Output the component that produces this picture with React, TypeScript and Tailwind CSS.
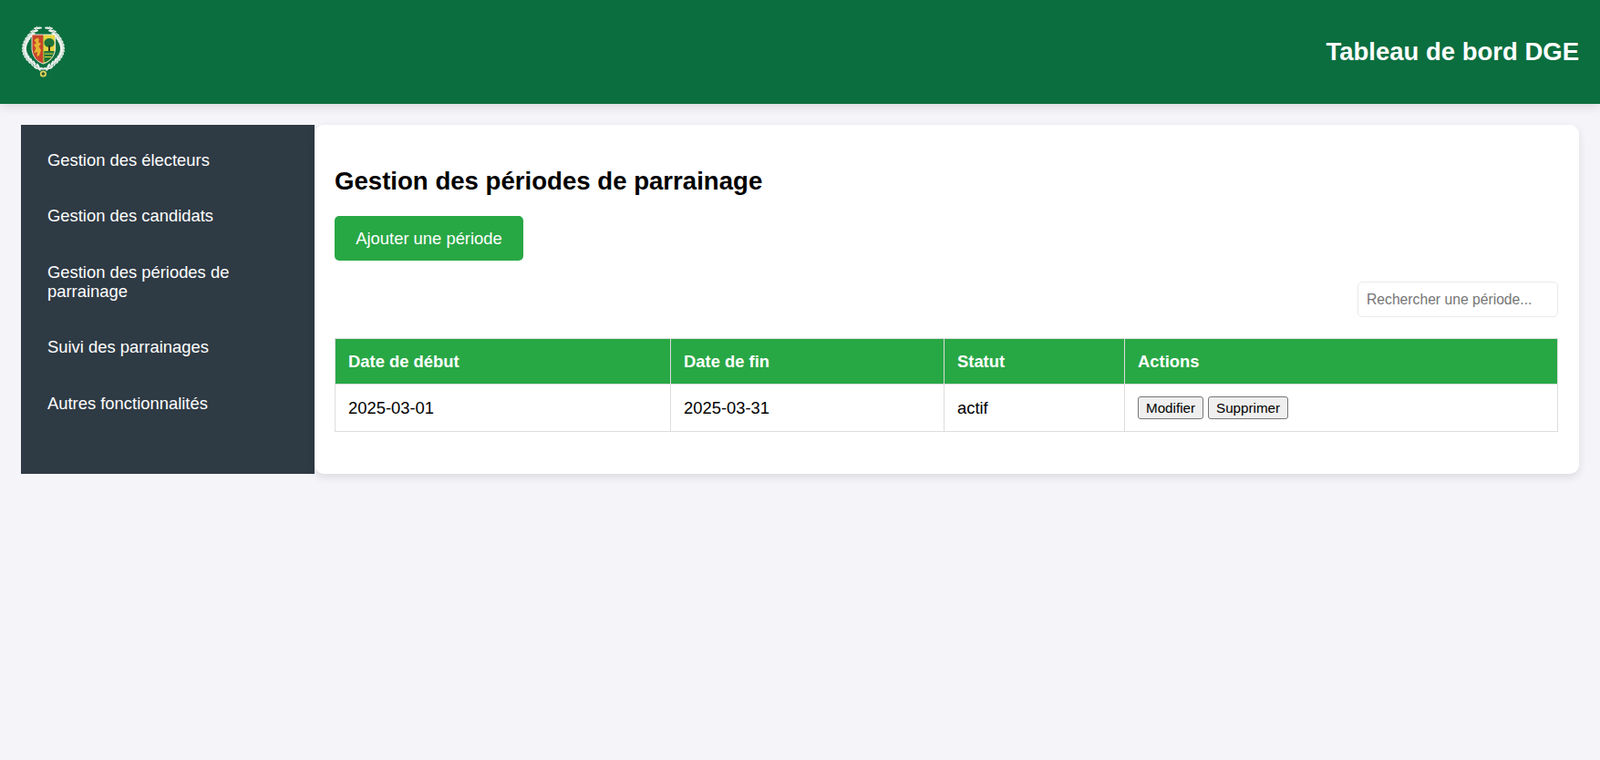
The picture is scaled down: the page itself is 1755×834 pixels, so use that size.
import type { ReactNode } from 'react'

const navItems = [
  'Gestion des électeurs',
  'Gestion des candidats',
  'Gestion des périodes de parrainage',
  'Suivi des parrainages',
  'Autres fonctionnalités',
]

// points along one branch of the wreath, left side
const wreath = Array.from({ length: 15 }, (_, i) => {
  const t = i / 14
  const x = (1 - t) * (1 - t) * 18 + 2 * t * (1 - t) * -11.5 + t * t * 21
  const y = (1 - t) * (1 - t) * 3 + 2 * t * (1 - t) * 28 + t * t * 47
  const tx = 2 * (1 - t) * (-11.5 - 18) + 2 * t * (21 - -11.5)
  const ty = 2 * (1 - t) * (28 - 3) + 2 * t * (47 - 28)
  return { x, y, angle: (Math.atan2(ty, tx) * 180) / Math.PI }
})

function Branch() {
  return (
    <g>
      {wreath.map((p, i) => (
        <g key={i}>
          <ellipse cx={p.x - 1.5} cy={p.y} rx="4.6" ry="1.2" fill="#eef3ef" transform={`rotate(${p.angle + 35} ${p.x} ${p.y})`} />
          <ellipse cx={p.x + 1} cy={p.y} rx="3.4" ry="1" fill="#c9d8ce" transform={`rotate(${p.angle - 35} ${p.x} ${p.y})`} />
        </g>
      ))}
    </g>
  )
}

function Emblem() {
  return (
    <svg width="50" height="58" viewBox="0 0 50 58" className="block">
      <Branch />
      <g transform="matrix(-1 0 0 1 51 0)">
        <Branch />
      </g>
      {/* ribbon */}
      <path d="M14 44 C20 48 31 48 37 44 L35 47 C30 49 21 49 16 47 Z" fill="#e7eee9" />
      {/* shield */}
      <path d="M13 10 H25.4 V42 C19 40 14 35 13 26 Z" fill="#c8452b" />
      <path d="M25.4 10 H38.6 V26 C37.6 35 32 40 25.4 42 Z" fill="#e6d540" />
      <path d="M15.5 16 L19 13.5 L21 15 L20 18 L23 20 L20.5 23 L23 27 L21 33 L18.5 34 L19 29 L15 30 L17.5 25 L15 21 L18 19.5 Z" fill="#e5b52f" />
      <ellipse cx="32" cy="19" rx="5.6" ry="5" fill="#1c7339" />
      <rect x="31" y="22" width="2" height="6" fill="#3b3a1e" />
      <path d="M26.4 28 H37.6 V29 C36.6 35 32 39 26.4 40.6 Z" fill="#1c7339" />
      <path d="M27 31 H36.4 M27 34.5 H34.5" stroke="#e6d540" strokeWidth="1" />
      <path d="M13 10 H38.6 V26 C37.6 35 32 40 25.4 42 C19 40 14 35 13 26 Z" fill="none" stroke="#f3f3ec" strokeWidth="0.9" />
      {/* medal */}
      <circle cx="25.4" cy="53" r="3.6" fill="#ded05c" />
      <circle cx="25.4" cy="53" r="1.8" fill="#2f5a30" />
    </svg>
  )
}

function Th({ children, className }: { children: ReactNode; className: string }) {
  return <th className={`border border-[#dddddd] bg-[#28a745] px-[14px] py-[13.5px] text-left text-[18.4px] font-bold leading-[22px] text-white ${className}`}>{children}</th>
}

function Td({ children }: { children: ReactNode }) {
  return <td className="border border-[#dddddd] px-[14px] py-[13px] text-[18.4px] leading-[25px] text-black">{children}</td>
}

function RowButton({ label }: { label: string }) {
  return (
    <button className="h-[25px] rounded-[3px] border border-[#767676] bg-[#efefef] px-[8px] text-[15.2px] leading-[17px] text-black">
      {label}
    </button>
  )
}

export default function App() {
  return (
    <div className="min-h-[834px] bg-[#f4f4f9] font-['Liberation_Sans',Arial,sans-serif]">
      <header className="flex h-[114px] items-center justify-between bg-[#0b6e3f] pl-[22px] pr-[23px] shadow-[0_4px_10px_rgba(0,0,0,0.1)]">
        <Emblem />
        <h1 className="text-[27.5px] font-bold text-white">Tableau de bord DGE</h1>
      </header>

      <div className="flex items-stretch px-[23px] pt-[23px]">
        <nav className="w-[322px] shrink-0 bg-[#2e3a44] px-[29px] pb-[22px] pt-[15px]">
          <ul>
            {navItems.map((item) => (
              <li key={item} className="py-[13px] text-[18.4px] leading-[21px] text-white [&:not(:first-child)]:mt-[14.4px]">
                {item}
              </li>
            ))}
          </ul>
        </nav>

        <main className="flex-1 rounded-[10px] bg-white pb-[46px] pl-[22px] pr-[23px] pt-[46px] shadow-[0_4px_10px_rgba(0,0,0,0.1)]">
          <h2 className="text-[27.6px] font-bold leading-[31px] text-black">Gestion des périodes de parrainage</h2>
          <button className="mt-[23px] block h-[49px] w-[207px] rounded-[5px] bg-[#28a745] text-[18.4px] text-white">
            Ajouter une période
          </button>
          <div className="mt-[23px] flex justify-end">
            <input
              placeholder="Rechercher une période..."
              className="h-[39px] w-[220px] rounded-[5px] border border-[#e9e9ec] px-[9px] text-[15.7px] placeholder:text-[#757575]"
            />
          </div>
          <table className="mt-[23px] w-full table-fixed border-collapse">
            <thead>
              <tr>
                <Th className="w-[368px]">Date de début</Th>
                <Th className="w-[300px]">Date de fin</Th>
                <Th className="w-[198px]">Statut</Th>
                <Th className="w-auto">Actions</Th>
              </tr>
            </thead>
            <tbody>
              <tr>
                <Td>2025-03-01</Td>
                <Td>2025-03-31</Td>
                <Td>actif</Td>
                <Td>
                  <div className="flex gap-[5px]">
                    <RowButton label="Modifier" />
                    <RowButton label="Supprimer" />
                  </div>
                </Td>
              </tr>
            </tbody>
          </table>
        </main>
      </div>
    </div>
  )
}
